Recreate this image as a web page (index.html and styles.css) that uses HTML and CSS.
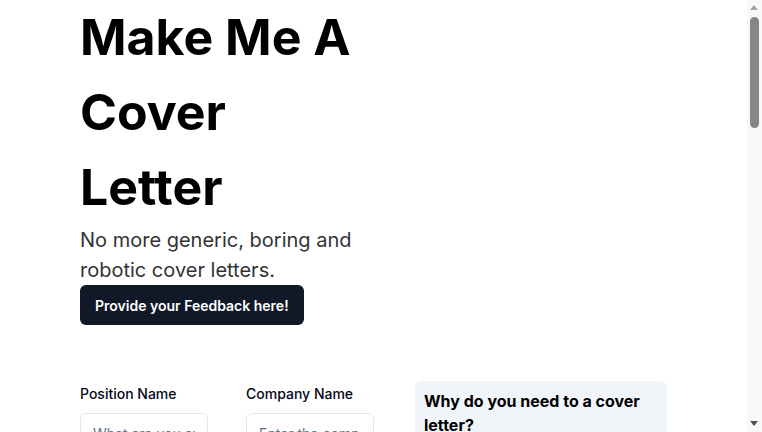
FILE: index.html
```html
<!DOCTYPE html>
<html lang="en">
<head>
<meta charset="utf-8">
<title>Make Me A Cover Letter</title>
<link rel="stylesheet" href="styles.css">
</head>
<body>
<main class="page">
  <section class="hero">
    <h1 class="title">Make Me A Cover Letter</h1>
    <p class="subtitle">No more generic, boring and robotic cover letters.</p>
    <button class="btn-dark" type="button">Provide your Feedback here!</button>
  </section>

  <section class="workspace">
    <form class="form">
      <div class="field">
        <label class="label" for="pos">Position Name</label>
        <input class="input" id="pos" type="text" placeholder="What are you applying for?">
      </div>
      <div class="field">
        <label class="label" for="comp">Company Name</label>
        <input class="input" id="comp" type="text" placeholder="Enter the company name">
      </div>
      <div class="field wide">
        <label class="label" for="name">Your Name</label>
        <input class="input" id="name" type="text" placeholder="Enter your full name">
      </div>
      <div class="field wide">
        <label class="label" for="jd">Job Description</label>
        <textarea class="input area" id="jd" placeholder="Paste the job description here"></textarea>
      </div>
      <div class="field wide">
        <label class="label" for="cv">Your Resume</label>
        <textarea class="input area" id="cv" placeholder="Paste your resume or experience here"></textarea>
      </div>
      <div class="field wide">
        <button class="btn-dark" type="button">Generate Cover Letter</button>
      </div>
    </form>

    <aside class="panel">
      <h2 class="panel-title">Why do you need to a cover letter?</h2>
      <p class="panel-text">A cover letter lets you explain why you are the right person for the role, in your own words, beyond what a resume can show.</p>
      <p class="panel-text">Recruiters read hundreds of applications. A tailored letter helps yours stand out from the pile.</p>
    </aside>
  </section>

  <section class="result">
    <h2 class="result-title">Your Cover Letter</h2>
    <div class="result-box">Your generated cover letter will appear here.</div>
  </section>
</main>

<div class="scrollbar" aria-hidden="true">
  <span class="sb-arrow sb-up"></span>
  <span class="sb-thumb"></span>
  <span class="sb-arrow sb-down"></span>
</div>
</body>
</html>
```

FILE: styles.css
```css
html, body {
  margin: 0;
  padding: 0;
  background: #ffffff;
}

body {
  padding-right: 15px;
  font-family: Inter, "Noto Sans", "Liberation Sans", sans-serif;
  color: #000000;
}

.page {
  width: 587px;
  margin: 0 auto;
  padding-bottom: 180px;
}

.hero {
  width: 294px;
}

.title {
  margin: 0;
  font-size: 50px;
  line-height: 75px;
  font-weight: 700;
  color: #000000;
}

.subtitle {
  margin: 0;
  font-size: 20px;
  line-height: 30px;
  color: #333333;
}

.btn-dark {
  display: block;
  height: 40px;
  padding: 0 15px;
  border: none;
  border-radius: 6px;
  background: #111827;
  color: #ffffff;
  font-family: inherit;
  font-size: 14px;
  font-weight: 600;
  cursor: pointer;
}

.workspace {
  display: flex;
  align-items: flex-start;
  gap: 41px;
  margin-top: 56px;
}

.form {
  width: 294px;
  display: grid;
  grid-template-columns: 128px 128px;
  column-gap: 38px;
  row-gap: 24px;
  padding-top: 3px;
}

.field {
  display: flex;
  flex-direction: column;
  gap: 9px;
}

.field.wide {
  grid-column: 1 / -1;
}

.label {
  font-size: 14px;
  line-height: 20px;
  font-weight: 500;
  color: #020817;
}

.input {
  box-sizing: border-box;
  width: 100%;
  height: 40px;
  padding: 0 12px;
  border: 1px solid #e2e8f0;
  border-radius: 6px;
  background: #ffffff;
  font-family: inherit;
  font-size: 14px;
  color: #020817;
}

.input::placeholder {
  color: #64748b;
}

.area {
  height: 180px;
  padding: 10px 12px;
  resize: none;
}

.panel {
  width: 252px;
  box-sizing: border-box;
  padding: 8px 9px 16px;
  border-radius: 6px;
  background: #f1f5f9;
}

.panel-title {
  margin: 0 0 8px;
  font-size: 16px;
  line-height: 24px;
  font-weight: 700;
  color: #000000;
}

.panel-text {
  margin: 0 0 10px;
  font-size: 14px;
  line-height: 20px;
  color: #333333;
}

.result {
  margin-top: 48px;
}

.result-title {
  margin: 0 0 12px;
  font-size: 24px;
  line-height: 32px;
  font-weight: 700;
}

.result-box {
  min-height: 200px;
  padding: 16px;
  border: 1px solid #e2e8f0;
  border-radius: 6px;
  font-size: 14px;
  color: #64748b;
}

/* drawn window scrollbar, overlays the right edge */
.scrollbar {
  position: fixed;
  top: 0;
  right: 0;
  width: 15px;
  height: 100vh;
  background: #f8f8f8;
}

.sb-arrow {
  position: absolute;
  left: 3px;
  width: 0;
  height: 0;
  border-left: 4.5px solid transparent;
  border-right: 4.5px solid transparent;
}

.sb-up {
  top: 5px;
  border-bottom: 5px solid #a3a3a3;
}

.sb-down {
  bottom: 6px;
  border-top: 5px solid #505050;
}

.sb-thumb {
  position: absolute;
  top: 17px;
  left: 3px;
  width: 9px;
  height: 111px;
  border-radius: 4.5px;
  background: #868686;
}
```
